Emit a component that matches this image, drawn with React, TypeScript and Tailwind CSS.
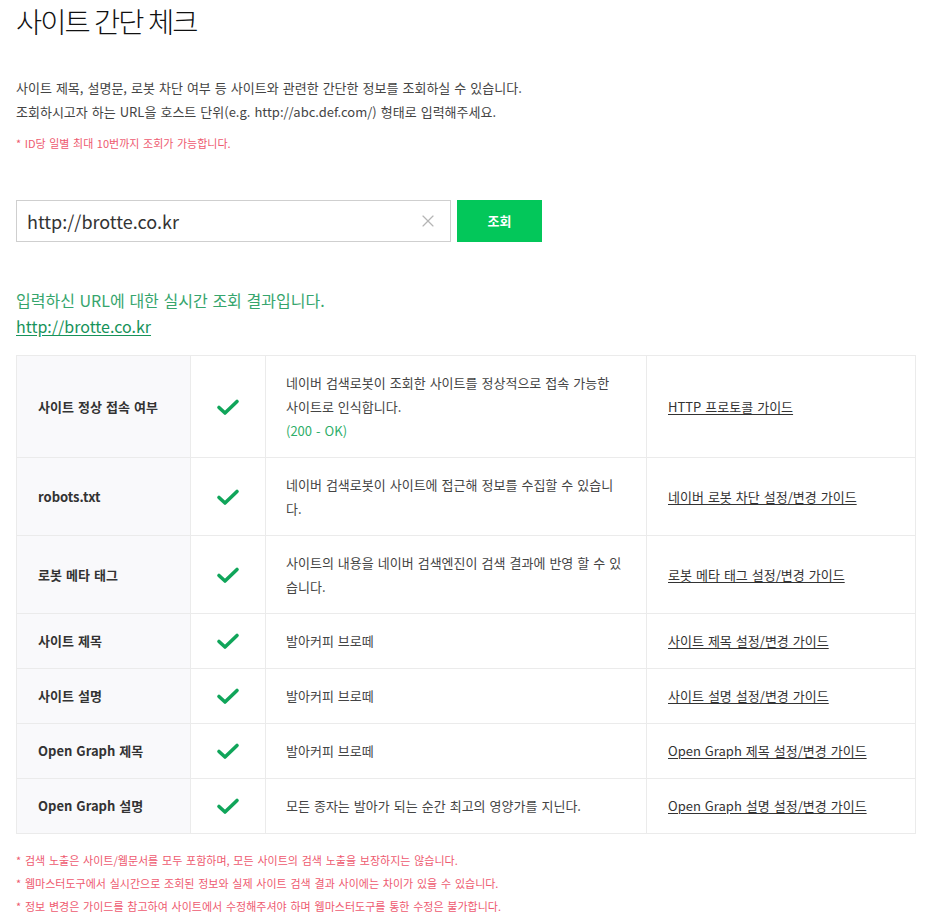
import { X } from 'lucide-react';

type Row = {
  label: string;
  desc: string[];
  status?: string;
  guide: string;
};

const rows: Row[] = [
  {
    label: '사이트 정상 접속 여부',
    desc: ['네이버 검색로봇이 조회한 사이트를 정상적으로 접속 가능한', '사이트로 인식합니다.'],
    status: '(200 - OK)',
    guide: 'HTTP 프로토콜 가이드',
  },
  {
    label: 'robots.txt',
    desc: ['네이버 검색로봇이 사이트에 접근해 정보를 수집할 수 있습니', '다.'],
    guide: '네이버 로봇 차단 설정/변경 가이드',
  },
  {
    label: '로봇 메타 태그',
    desc: ['사이트의 내용을 네이버 검색엔진이 검색 결과에 반영 할 수 있', '습니다.'],
    guide: '로봇 메타 태그 설정/변경 가이드',
  },
  { label: '사이트 제목', desc: ['발아커피 브로떼'], guide: '사이트 제목 설정/변경 가이드' },
  { label: '사이트 설명', desc: ['발아커피 브로떼'], guide: '사이트 설명 설정/변경 가이드' },
  { label: 'Open Graph 제목', desc: ['발아커피 브로떼'], guide: 'Open Graph 제목 설정/변경 가이드' },
  {
    label: 'Open Graph 설명',
    desc: ['모든 종자는 발아가 되는 순간 최고의 영양가를 지닌다.'],
    guide: 'Open Graph 설명 설정/변경 가이드',
  },
];

function CheckMark() {
  return (
    <svg width="24" height="18" viewBox="0 0 24 18" fill="none" className="mx-auto block">
      <path
        d="M3 9.5 L9 15 L21 3.5"
        stroke="#10a55a"
        strokeWidth="3.6"
        strokeLinecap="round"
        strokeLinejoin="round"
      />
    </svg>
  );
}

export default function App() {
  return (
    <div className="min-h-[921px] bg-white pl-4 text-[#333] font-['Noto_Sans_CJK_KR','Noto_Sans',sans-serif] [word-spacing:0.07em]">
      <h1 className="h-[42px] text-[28.5px] leading-[42px] font-light tracking-[-0.07em] text-[#111]">사이트 간단 체크</h1>

      <div className="mt-[34px] text-[13px] leading-[24px] text-[#444]">
        <p>사이트 제목, 설명문, 로봇 차단 여부 등 사이트와 관련한 간단한 정보를 조회하실 수 있습니다.</p>
        <p>조회하시고자 하는 URL을 호스트 단위(e.g. http://abc.def.com/) 형태로 입력해주세요.</p>
      </div>
      <p className="mt-[10px] text-[11px] leading-[18px] text-[#ee5a6f]">* ID당 일별 최대 10번까지 조회가 가능합니다.</p>

      <div className="mt-[48px] flex gap-[6px]">
        <div className="flex h-[42px] w-[435px] items-center border border-[#cfcfcf] pl-[10px] pr-[12px]">
          <span className="flex-1 text-[18px] text-[#333]">http://brotte.co.kr</span>
          <X className="h-[20px] w-[20px] text-[#b5b5b5]" strokeWidth={1.4} />
        </div>
        <button className="h-[42px] w-[85px] bg-[#03c75a] text-[13px] font-bold text-white">조회</button>
      </div>

      <p className="mt-[45px] text-[16px] leading-[26px] text-[#36a56d]">입력하신 URL에 대한 실시간 조회 결과입니다.</p>
      <a className="block w-fit text-[16px] leading-[26px] text-[#17935a] underline underline-offset-2">
        http://brotte.co.kr
      </a>

      <table className="mt-[16px] w-[899px] table-fixed border-collapse border border-[#ebebeb] text-[13px] leading-[24px]">
        <colgroup>
          <col className="w-[174px]" />
          <col className="w-[75px]" />
          <col className="w-[381px]" />
          <col className="w-[269px]" />
        </colgroup>
        <tbody>
          {rows.map((r) => (
            <tr key={r.label} className="h-[55px]">
              <td className="border border-[#ebebeb] bg-[#f9f9fb] py-[14.5px] pl-[21px] font-bold text-[#333]">{r.label}</td>
              <td className="border border-[#ebebeb] py-[14.5px] text-center">
                <CheckMark />
              </td>
              <td className="border border-[#ebebeb] py-[14.5px] pl-[20px] pr-[10px] whitespace-nowrap text-[#444]">
                {r.desc.map((line, i) => (
                  <span key={i} className="block">
                    {line}
                  </span>
                ))}
                {r.status && <span className="block text-[#2fae6a]">{r.status}</span>}
              </td>
              <td className="border border-[#ebebeb] py-[14.5px] pl-[21px] whitespace-nowrap">
                <a className="text-[#333] underline underline-offset-2">{r.guide}</a>
              </td>
            </tr>
          ))}
        </tbody>
      </table>

      <ul className="mt-[15px] text-[11px] leading-[23px] text-[#ee5a6f] [word-spacing:0.12em]">
        <li>* 검색 노출은 사이트/웹문서를 모두 포함하며, 모든 사이트의 검색 노출을 보장하지는 않습니다.</li>
        <li>* 웹마스터도구에서 실시간으로 조회된 정보와 실제 사이트 검색 결과 사이에는 차이가 있을 수 있습니다.</li>
        <li>* 정보 변경은 가이드를 참고하여 사이트에서 수정해주셔야 하며 웹마스터도구를 통한 수정은 불가합니다.</li>
      </ul>
    </div>
  );
}
